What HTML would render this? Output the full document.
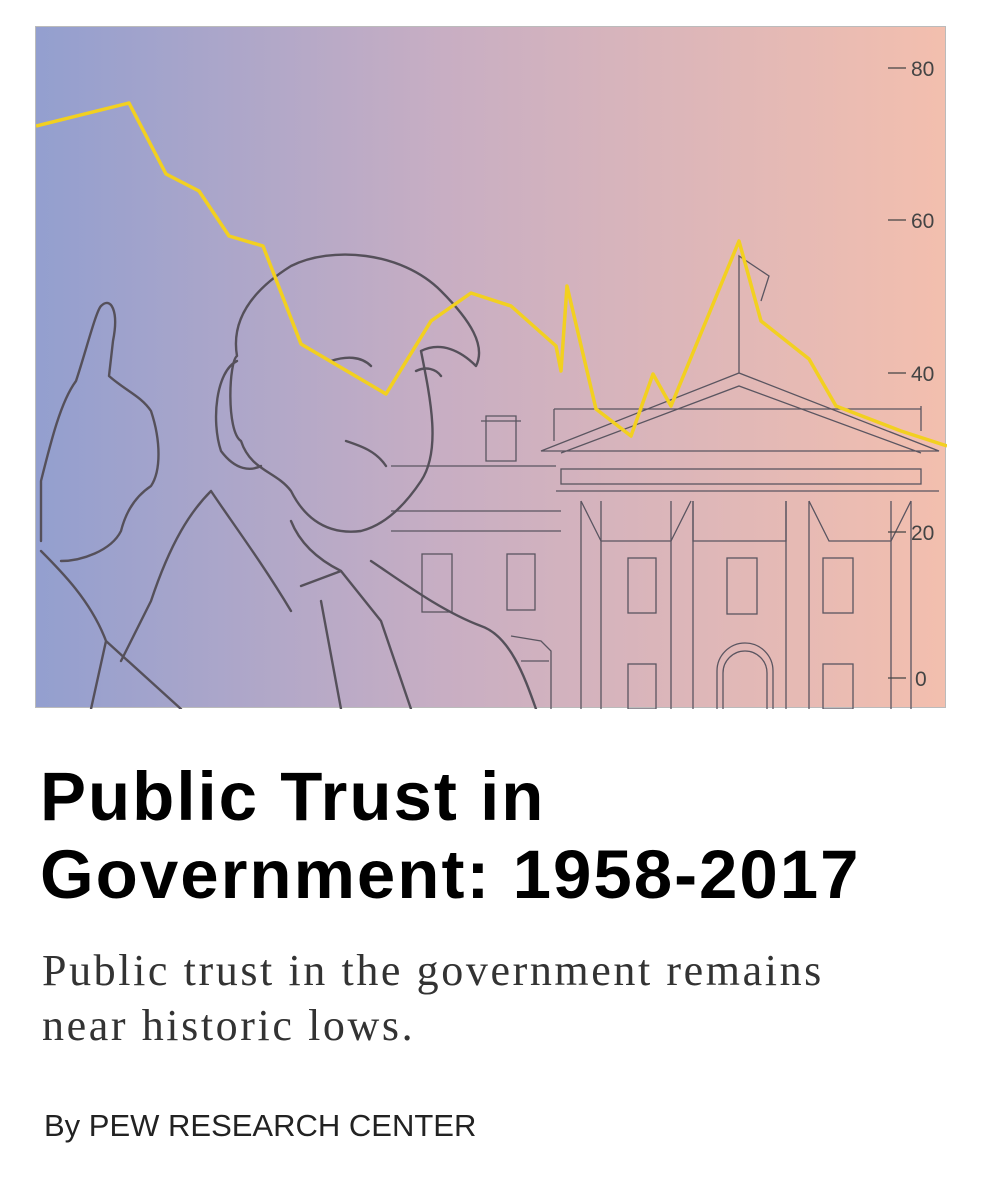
<!DOCTYPE html>
<html><head><meta charset="utf-8"><style>
body{margin:0;background:#fff;width:981px;height:1182px;overflow:hidden;position:relative}
.img{position:absolute;left:35px;top:26px;width:911px;height:682px;border:1px solid #bbb;box-sizing:border-box;background:linear-gradient(90deg,#939fcf,#c8aec3 45%,#f3bfae)}
h1{position:absolute;left:40px;top:758px;margin:0;font:bold 69px/78px "Liberation Sans",sans-serif;color:#000;letter-spacing:2px}
p.s{position:absolute;left:42px;top:943px;margin:0;font:44px/55px "Liberation Serif",serif;color:#333;letter-spacing:2.6px}
p.b{position:absolute;left:44px;top:1108px;margin:0;font:31px/36px "Liberation Sans",sans-serif;color:#222;letter-spacing:0}
</style></head><body>
<div class="img">
<svg width="911" height="682" viewBox="35 26 911 682" style="position:absolute;left:0;top:0">
<g fill="none" stroke="#5a5560" stroke-width="1.3">
<path d="M540 450 L738 372 L938 450 Z M560 452 L738 385 L920 452"/>
<path d="M553 408 H920 M553 408 V440 M920 405 V430"/>
<rect x="560" y="468" width="360" height="15"/>
<path d="M555 490 H938 M580 500 V708 M600 500 V708 M670 500 V708 M692 500 V708 M785 500 V708 M808 500 V708 M890 500 V708 M910 500 V708"/>
<path d="M580 500 L600 540 H670 L690 500 M692 500 V540 H785 V500 M808 500 L828 540 H890 L910 500"/>
<rect x="627" y="557" width="28" height="55"/><rect x="726" y="557" width="30" height="56"/><rect x="822" y="557" width="30" height="55"/>
<rect x="627" y="663" width="28" height="45"/><rect x="822" y="663" width="30" height="45"/>
<path d="M716 708 V670 A22 22 0 0 1 772 670 V708 M722 708 V672 A16 16 0 0 1 766 672 V708"/>
<path d="M738 372 V255 L768 275 L760 300"/>
<path d="M390 465 H555 M390 510 H560 M390 530 H560 M485 415 H515 V460 H485 Z M480 420 H520"/>
<rect x="421" y="553" width="30" height="58"/><rect x="506" y="553" width="28" height="56"/>
<path d="M510 635 L540 640 L550 650 V708 M520 660 H548"/>
</g>
<g fill="none" stroke="#55505a" stroke-width="2.4" stroke-linejoin="round" stroke-linecap="round">
<path d="M236 355 C230 320 250 290 290 265 C330 245 400 250 440 290 C470 320 485 345 475 365 C460 350 440 340 420 350 C430 400 440 450 420 480 C400 510 380 525 360 530 C320 535 300 510 290 490 C275 470 250 470 240 440 C225 430 228 360 236 355 Z"/>
<path d="M236 360 C215 370 210 420 220 450 C235 470 250 470 260 465"/>
<path d="M210 490 C190 510 170 540 150 600 L120 660 M210 490 C230 520 260 560 290 610 M290 520 C300 545 320 560 340 570 M300 585 L340 570 L380 620 L410 708 M320 600 L340 708 M370 560 C400 580 440 610 480 625 C510 635 525 680 535 708"/>
<path d="M40 540 L40 480 C50 440 60 400 75 380 C85 350 95 310 100 305 C110 295 118 310 112 340 L108 375 C125 390 140 395 150 410 C160 440 160 470 150 485 C135 495 125 510 120 530 C110 550 80 560 60 560"/>
<path d="M40 550 C60 570 90 600 105 640 L90 708 M105 640 L180 708"/>
<path d="M330 360 C345 355 360 355 370 365 M415 370 C425 365 435 368 440 375 M345 440 C360 445 375 450 385 465"/>
</g>
<polyline fill="none" stroke="#f2d020" stroke-width="3.5" stroke-linejoin="round" points="35,125 128,102 165,173 198,190 228,235 262,245 300,343 385,393 430,320 470,292 510,305 555,345 560,370 566,285 595,408 630,435 652,373 670,405 738,240 760,320 808,358 835,405 900,430 946,445"/>
<g font-family="Liberation Sans,sans-serif" font-size="21" fill="#444">
<path d="M887 67 H905 M887 219 H905 M887 372 H905 M887 531 H905 M887 677 H905" stroke="#444" stroke-width="1.3"/>
<text x="910" y="75">80</text><text x="910" y="227">60</text><text x="910" y="380">40</text><text x="910" y="539">20</text><text x="914" y="685">0</text>
</g>
</svg>
</div>
<h1>Public Trust in<br>Government: 1958-2017</h1>
<p class="s">Public trust in the government remains<br>near historic lows.</p>
<p class="b">By PEW RESEARCH CENTER</p>
</body></html>
